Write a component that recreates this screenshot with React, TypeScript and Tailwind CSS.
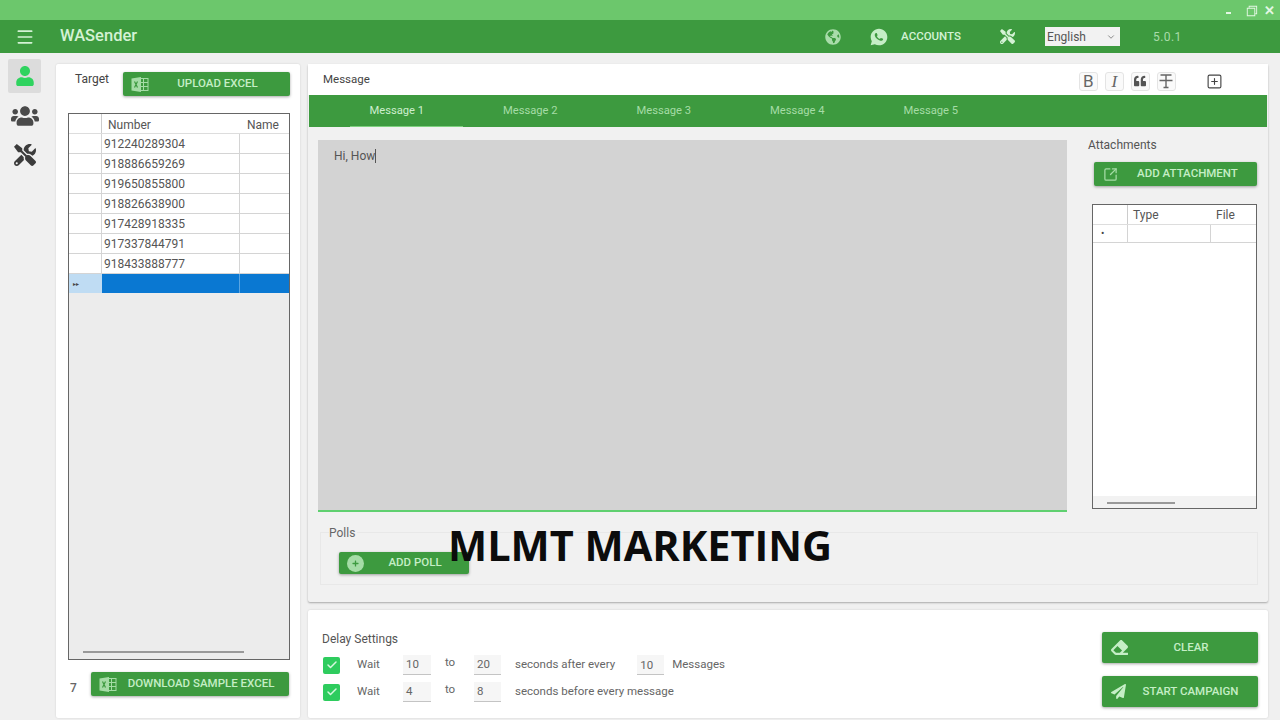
import React from "react";
import { Menu, SquarePlus, ChevronDown, Check, SquareArrowOutUpRight } from "lucide-react";
import { FaEraser, FaGlobeAmericas, FaPaperPlane, FaPlus, FaQuoteLeft, FaTools, FaUser, FaUsers } from "react-icons/fa";
import { RiWhatsappFill } from "react-icons/ri";
import { VscChromeRestore } from "react-icons/vsc";

const numbers = [
  "912240289304",
  "918886659269",
  "919650855800",
  "918826638900",
  "917428918335",
  "917337844791",
  "918433888777",
];

function ExcelIcon() {
  return (
    <svg width="18" height="15" viewBox="0 0 18 15" className="text-[#a5dca6]" fill="none">
      <rect x="8" y="1.5" width="9" height="12" stroke="currentColor" />
      <path d="M12.5 1.5v12M8 5.5h9M8 9.5h9" stroke="currentColor" />
      <path d="M0.5 1.5 10 0v15L0.5 13.5z" fill="currentColor" />
      <path d="M3.5 4.5l3 6M6.5 4.5l-3 6" stroke="#3d9a3f" strokeWidth="1.2" />
    </svg>
  );
}

function StrikeIcon() {
  return (
    <svg width="16" height="16" viewBox="0 0 16 16" fill="none" stroke="#666" strokeWidth="1.4">
      <path d="M2.5 2h11M8 2v12.5M1.5 7.5h13M5.5 14.5h5" />
    </svg>
  );
}

function GreenButton({ icon, label, className }: { icon: React.ReactNode; label: string; className: string }) {
  return (
    <button className={`relative flex items-center bg-[#3d9a3f] rounded-[2px] text-[11.5px] font-medium text-[#c5eec6] shadow-[0_1px_3px_rgba(0,0,0,0.35)] ${className}`}>
      {icon}
      <span className="flex-1 text-center">{label}</span>
    </button>
  );
}

function FormatBox({ children }: { children: React.ReactNode }) {
  return (
    <div className="flex h-[19px] w-[19px] items-center justify-center rounded-[3px] border border-[#e4e4e4] bg-[#fafafa] text-[#666]">
      {children}
    </div>
  );
}

function Field({ value, className }: { value: string; className: string }) {
  return (
    <div className={`flex h-[20px] items-center bg-[#f6f6f6] pl-[3px] border-b border-[#c4c4c4] ${className}`}>
      {value}
    </div>
  );
}

function DelayRow({ from, to, children }: { from: string; to: string; children: React.ReactNode }) {
  return (
    <div className="flex h-[20px] items-center text-[11.5px] text-[#666]">
      <div className="flex h-[17px] w-[17px] items-center justify-center rounded-[2px] bg-[#2ecc5e]">
        <Check size={12} strokeWidth={3} className="text-[#d8f7df]" />
      </div>
      <span className="ml-[17px] w-[46px]">Wait</span>
      <Field value={from} className="w-[28px]" />
      <span className="-mt-[4px] w-[43px] pr-[5px] text-center">to</span>
      <Field value={to} className="w-[27px]" />
      <span className="ml-[14px]">{children}</span>
    </div>
  );
}

export default function App() {
  return (
    <div className="relative flex h-[720px] w-[1280px] flex-col overflow-hidden bg-[#f0f0f0] font-['Roboto',sans-serif] text-[12px] text-[#555]">
      {/* title bar */}
      <div className="flex h-[20px] items-center justify-end gap-[5px] bg-[#6cc76c] pr-[4px] text-[#e4f7e4]">
        <div className="mt-[6px] mr-[8px] h-[2px] w-[5px] bg-[#e4f7e4]" />
        <VscChromeRestore size={15} />
        <span className="w-[12px] text-[13px] font-bold leading-none">✕</span>
      </div>

      {/* header */}
      <header className="flex h-[33px] items-center bg-[#3d9a3f] text-[#d4f2d5]">
        <Menu size={20} className="ml-[15px]" />
        <span className="ml-[25px] text-[16.5px] font-medium">WASender</span>
        <FaGlobeAmericas size={16} className="ml-[688px] text-[#a9dcaa]" />
        <RiWhatsappFill size={20} className="ml-[28px] text-[#c5eec6]" />
        <span className="ml-[12px] w-[62px] text-[11.5px] font-medium">ACCOUNTS</span>
        <FaTools size={15} className="ml-[37px] text-[#d4f2d5]" />
        <div className="ml-[30px] flex h-[19px] w-[75px] items-center justify-between bg-[#f2f2f2] pl-[2px] pr-[4px] text-[12px] text-[#555]">
          English
          <ChevronDown size={10} className="text-[#777]" />
        </div>
        <span className="ml-[33px] text-[12px] tracking-[0.4px] text-[#a9dcaa]">5.0.1</span>
      </header>

      <div className="flex min-h-0 flex-1 pt-[11px] pb-[2px]">
        {/* sidebar */}
        <nav className="flex w-[56px] flex-col items-start">
          <div className="ml-[8px] -mt-[5px] flex h-[34px] w-[33px] items-center justify-center rounded-[2px] bg-[#dcdcdc] text-[#2fd35f]">
            <FaUser size={20} />
          </div>
          <FaUsers size={28} className="ml-[11px] mt-[9px] text-[#4a4a4a]" />
          <FaTools size={22} className="ml-[14px] mt-[14px] text-[#3c3c3c]" />
        </nav>

        {/* target */}
        <section className="flex w-[244px] flex-col rounded-[2px] bg-white pl-[12px] pr-[10px] pt-[8px] shadow-[0_0_2px_rgba(0,0,0,0.15)]">
          <div className="flex items-start">
            <span className="ml-[7px] -mt-[2px] w-[48px] text-[#444]">Target</span>
            <GreenButton icon={<span className="ml-[8px]"><ExcelIcon /></span>} label="UPLOAD EXCEL" className="h-[24px] w-[167px] pr-[4px]" />
          </div>

          <div className="relative mt-[17px] flex min-h-0 flex-1 flex-col border-[1.5px] border-[#666] bg-[#ececec]">
            <div className="flex h-[20px] border-b border-[#ddd] bg-white text-[#555]">
              <div className="w-[33px] border-r border-[#ccc]" />
              <div className="w-[138px] pl-[6px] pt-[2px]">Number</div>
              <div className="flex-1 pl-[7px] pt-[2px]">Name</div>
            </div>
            {numbers.map((n) => (
              <div key={n} className="flex h-[20px] border-b border-[#d4d4d4] bg-white">
                <div className="w-[33px] border-r border-[#d4d4d4]" />
                <div className="flex w-[138px] items-center border-r border-[#d4d4d4] pl-[2px]">{n}</div>
                <div className="flex-1" />
              </div>
            ))}
            <div className="flex h-[19px]">
              <div className="flex w-[33px] items-center bg-[#bfdcf3] pl-[4px] text-[6px] text-[#444]">▸▸</div>
              <div className="w-[138px] border-r border-[#5aa5e2] bg-[#0a78d2]" />
              <div className="flex-1 bg-[#0a78d2]" />
            </div>
            <div className="absolute bottom-[6px] left-[14px] h-[2px] w-[161px] bg-[#999]" />
          </div>

          <div className="flex h-[58px] items-start pt-[12px]">
            <span className="ml-[2px] mt-[7px] w-[21px] font-medium text-[#666]">7</span>
            <GreenButton icon={<span className="ml-[8px]"><ExcelIcon /></span>} label="DOWNLOAD SAMPLE EXCEL" className="h-[24px] w-[198px] pr-[4px]" />
          </div>
        </section>

        <div className="ml-[8px] flex w-[960px] flex-col gap-[8px]">
          {/* message card */}
          <section className="flex h-[538px] flex-col rounded-[2px] bg-[#f1f1f1] shadow-[0_1px_2px_rgba(0,0,0,0.3)]">
            <div className="flex h-[31px] items-center bg-white pl-[15px] text-[11.5px] text-[#444]">
              <span>Message</span>
              <div className="ml-[709px] flex items-center gap-[7px] pt-[3px]">
                <FormatBox><span className="text-[17px] leading-none">B</span></FormatBox>
                <FormatBox><span className="font-['Liberation_Serif',serif] text-[17px] italic leading-none">I</span></FormatBox>
                <FormatBox><FaQuoteLeft size={12} className="text-[#555]" /></FormatBox>
                <FormatBox><StrikeIcon /></FormatBox>
                <SquarePlus size={17} strokeWidth={1.6} className="ml-[23px] text-[#444]" />
              </div>
            </div>

            <div className="mx-[1px] flex h-[32px] items-center bg-[#3d9a3f] pl-[21px] pt-[1px] text-[11.2px] text-[#a5dca6]">
              {["Message 1", "Message 2", "Message 3", "Message 4", "Message 5"].map((t, i) => (
                <div key={t} className="relative flex h-full w-[133.5px] items-center justify-center">
                  <span className={i === 0 ? "text-[#cdeece]" : ""}>{t}</span>
                  {i === 0 && <div className="absolute bottom-0 left-[20px] h-[1px] w-[113px] bg-[#7ed07f]" />}
                </div>
              ))}
            </div>

            <div className="flex pl-[10px] pt-[13px]">
              <div className="h-[372px] w-[749px] border-b-2 border-[#5fd070] bg-[#d3d3d3] pl-[16px] pt-[7px] text-[#555]">
                Hi, How<span className="border-r border-[#555]" />
              </div>
              <div className="ml-[21px] w-[176px]">
                <div className="-mt-[4px] text-[#555]">Attachments</div>
                <GreenButton
                  icon={<SquareArrowOutUpRight size={15} className="ml-[9px] text-[#a5dca6]" />}
                  label="ADD ATTACHMENT"
                  className="ml-[6px] mt-[8px] h-[24px] w-[163px] pl-0"
                />
                <div className="relative ml-[4px] mt-[18px] h-[305px] w-[165px] border-[1.5px] border-[#666] bg-white">
                  <div className="flex h-[20px] border-b border-[#ddd]">
                    <div className="w-[35px] border-r border-[#ccc]" />
                    <div className="w-[83px] pl-[5px] pt-[1px]">Type</div>
                    <div className="flex-1 pl-[5px] pt-[1px]">File</div>
                  </div>
                  <div className="flex h-[18px] border-b border-[#d4d4d4]">
                    <div className="flex w-[35px] items-center border-r border-[#d4d4d4] pl-[8px] text-[10px] text-[#444]">•</div>
                    <div className="w-[83px] border-r border-[#d4d4d4]" />
                  </div>
                  <div className="absolute inset-x-0 bottom-0 h-[12px] bg-[#f2f2f2]" />
                  <div className="absolute bottom-[4px] left-[14px] h-[2px] w-[68px] bg-[#999]" />
                </div>
              </div>
            </div>

            <div className="relative mx-[12px] mt-[20px] h-[53px] w-[938px] border border-[#e8e8e8]">
              <span className="absolute -top-[9px] left-[8px] bg-[#f1f1f1] pr-[2px] text-[#666]">Polls</span>
              <GreenButton
                icon={
                  <span className="ml-[8px] flex h-[17px] w-[17px] items-center justify-center rounded-full bg-[#a5dca6]">
                    <FaPlus size={7} className="text-[#3d9a3f]" />
                  </span>
                }
                label="ADD POLL"
                className="ml-[18px] mt-[19px] h-[22px] w-[130px] pr-[3px]"
              />
            </div>
          </section>

          {/* delay settings */}
          <section className="flex min-h-0 flex-1 rounded-[2px] bg-white px-[14px] pt-[20px] shadow-[0_0_2px_rgba(0,0,0,0.15)]">
            <div className="flex-1">
              <div className="text-[#555]">Delay Settings</div>
              <div className="ml-[1px] mt-[7px] flex flex-col gap-[7px]">
                <DelayRow from="10" to="20">
                  seconds after every
                  <span className="ml-[22px] inline-block h-[20px] w-[27px] border-b border-[#c4c4c4] bg-[#f6f6f6] pl-[3px] align-middle leading-[20px]">10</span>
                  <span className="ml-[8px]">Messages</span>
                </DelayRow>
                <DelayRow from="4" to="8">seconds before every message</DelayRow>
              </div>
            </div>
            <div className="mt-[2px] mr-[-4px] flex w-[156px] flex-col gap-[13px]">
              <GreenButton icon={<FaEraser size={17} className="ml-[9px] text-[#c5eec6]" />} label="CLEAR" className="h-[31px] w-[156px] pr-[4px]" />
              <GreenButton icon={<FaPaperPlane size={15} className="ml-[9px] text-[#c5eec6]" />} label="START CAMPAIGN" className="h-[31px] w-[156px] pr-[3px]" />
            </div>
          </section>
        </div>
      </div>

      {/* caption over the video */}
      <div className="absolute left-[448px] top-[521px] font-['Open_Sans',sans-serif] text-[41.5px] font-bold leading-[48px] text-[#0c0c0c]">
        MLMT MARKETING
      </div>
    </div>
  );
}
